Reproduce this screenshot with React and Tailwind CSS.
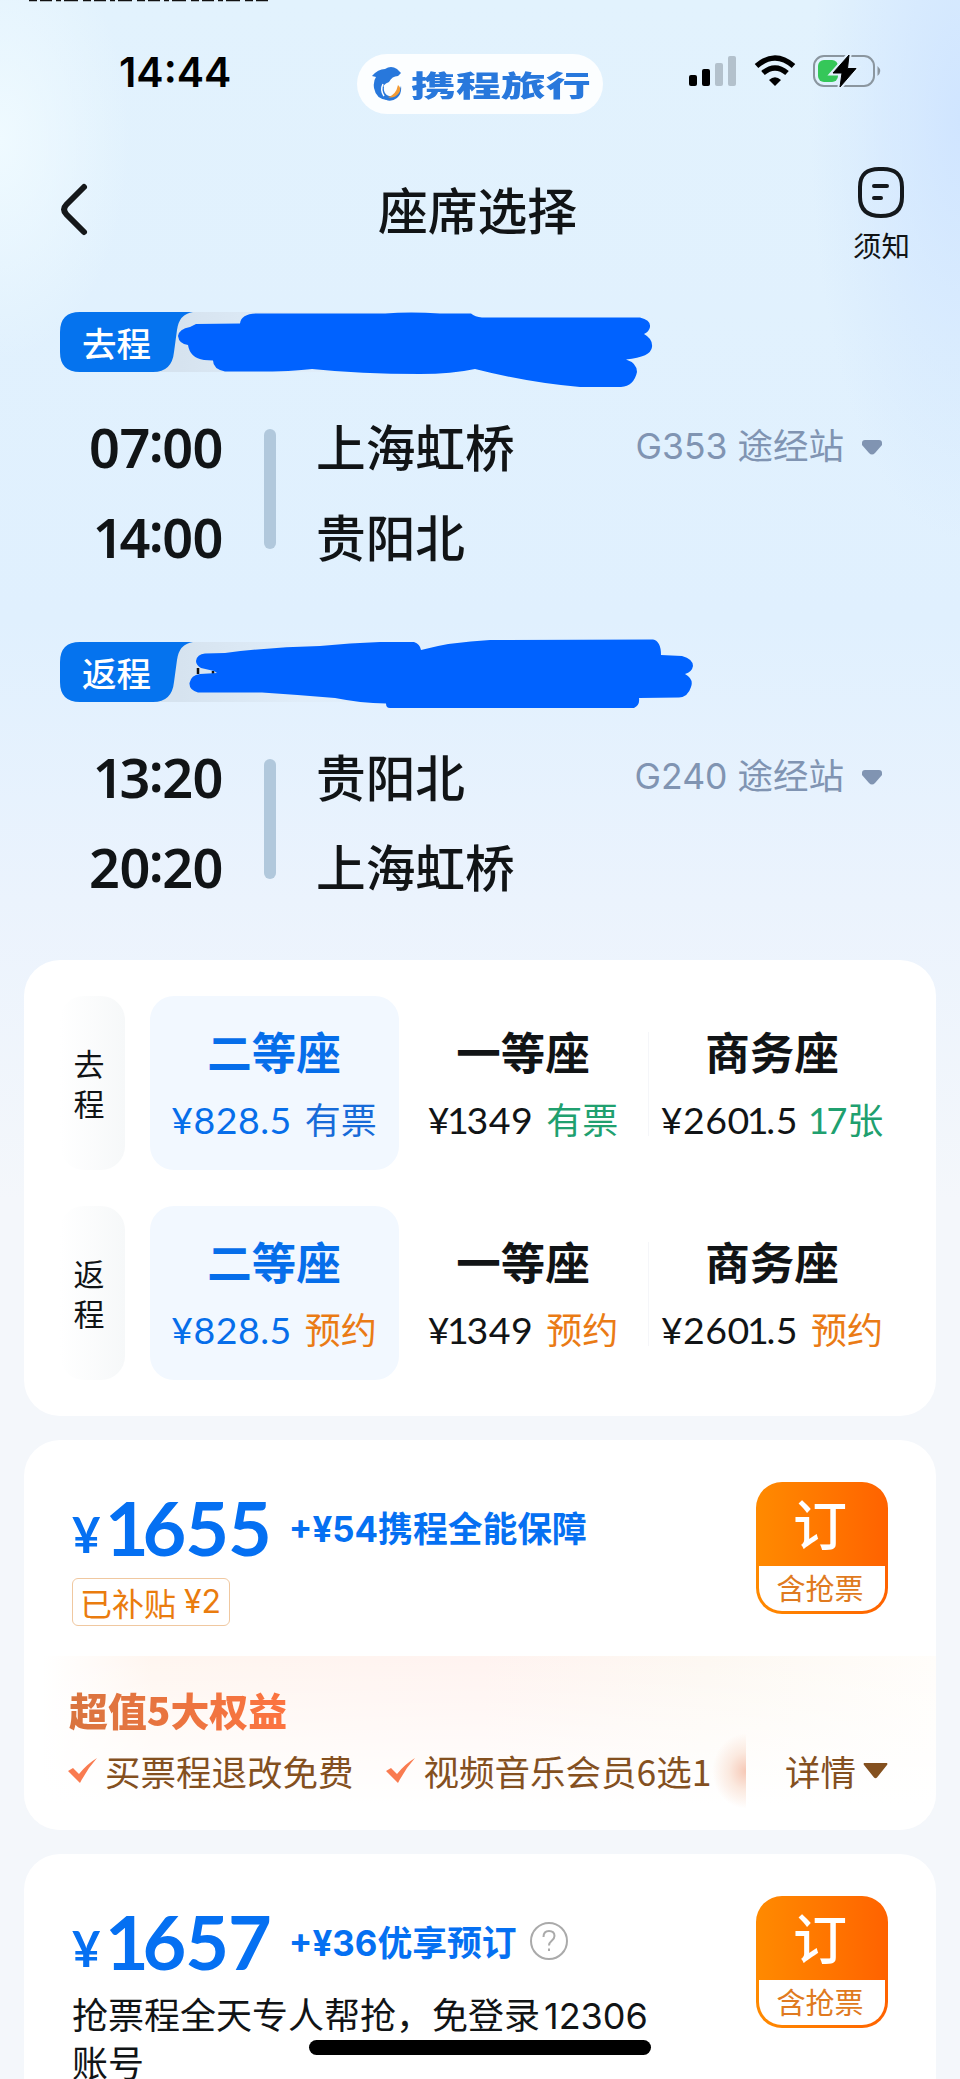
const TRIPS = [
  {
    label: '去程',
    train: 'G353',
    stops: [
      { time: ['07', '00'], station: '上海虹桥' },
      { time: ['14', '00'], station: '贵阳北' },
    ],
    mask: 'M178 336Q179 329 190 327L196 324L240 323.500Q241 314 256 313.500L385 313.500Q410 311.500 440 313.500L471 313.500Q475 317 482 317.500L640 317.500Q651 320 650 327Q649 332 644 334Q653 339 652 347Q651 357 626 359.500Q637 363 637 372Q634 386 621 387L580 387Q530 383 475 369Q452 374 420 374Q360 374 312 369Q290 372 240 371.500L225 371.500Q213 369 213 360.500L204 360Q190 358 188 345Q179 344 178 336Z',
  },
  {
    label: '返程',
    train: 'G240',
    stops: [
      { time: ['13', '20'], station: '贵阳北' },
      { time: ['20', '20'], station: '上海虹桥' },
    ],
    mask: 'M196 661Q197 654 205 653.500L225 653Q270 647 320 646Q350 643 380 642L414 642Q420 644 421 650Q450 642 490 640L653 639.500Q661 641 661 655L682 656Q693 659 693 666Q692 672 685 674Q694 679 691 687Q688 697 679 697.500L639 698Q640 705 634 708L390 708Q386 708 386 703.500Q360 703 335 698Q300 695 262 692.500L198 692.500Q189 690 189.500 683Q191 675 200 674L217 673L214 671L201 668Q196 665 196 661Z',
  },
]

const SEAT_ROWS = [
  {
    label: '去程',
    seats: [
      { name: '二等座', price: '¥828.5', status: '有票', tone: 'text-[#176bd8]', active: true },
      { name: '一等座', price: '¥1349', status: '有票', tone: 'text-[#20a06f]' },
      { name: '商务座', price: '¥2601.5', status: '17张', tone: 'text-[#20a06f]' },
    ],
  },
  {
    label: '返程',
    seats: [
      { name: '二等座', price: '¥828.5', status: '预约', tone: 'text-[#ea7b15]', active: true },
      { name: '一等座', price: '¥1349', status: '预约', tone: 'text-[#ea7b15]' },
      { name: '商务座', price: '¥2601.5', status: '预约', tone: 'text-[#ea7b15]' },
    ],
  },
]

// tabular figures leave too much air round a "1", so pull it in
function Digits({ children }) {
  return children.split(/(1)/).map((part, i) =>
    part === '1' ? <span key={i} className="-mr-[0.07em] -ml-[0.08em]">1</span> : part
  )
}

function StatusBar() {
  return (
    <div className="flex h-[60px] items-start pl-[119px]">
      <div className="w-[238px] font-[Inter,sans-serif] text-[41px] leading-[36px] font-semibold text-black">14:44</div>
      <div className="flex h-[60px] w-[246px] items-center rounded-full bg-white/90 pl-[14px]">
        <svg width="34" height="36" viewBox="0 0 34 36" fill="none">
          <path d="M1 10Q7 3 14 3Q20-1 26 3L30 7L27 10Q21 10 18 16Q11 18 11 26Q11 31 16 34Q5 33 3 22Q2 15 5 11Z" fill="#2878dc" />
          <path d="M11 18Q5 25 11 31Q18 38 26 32Q31 28 30 20Q27 31 18 30Q12 28 13 21" fill="#2878dc" />
          <path d="M27 19Q31 22 28 27Q23 33 17 31Q25 29 27 19Z" fill="#f39b35" />
          <path d="M12 18Q9 24 13 30" stroke="#fff" strokeWidth="1.500" />
        </svg>
        <span className="ml-[6px] inline-block origin-left scale-x-[1.55] whitespace-nowrap font-['Noto_Sans_CJK_SC',sans-serif] text-[29px] leading-[38px] font-black text-[#2878dc]">携程旅行</span>
      </div>
      <svg className="ml-[86px]" width="194" height="34" viewBox="0 0 194 34">
        <rect x="0" y="21" width="8" height="11" rx="2" />
        <rect x="13" y="15" width="8" height="17" rx="2" />
        <rect x="26" y="9" width="8" height="23" rx="2" fill="#b3c1cc" />
        <rect x="39" y="2" width="8" height="30" rx="2" fill="#b3c1cc" />
        <path d="M67.500 12Q86-4 104.500 12" fill="none" stroke="#000" strokeWidth="5.500" />
        <path d="M74 19Q86 9 98 19" fill="none" stroke="#000" strokeWidth="5.500" />
        <path d="M80 26Q86 20.500 92 26L86 32Z" />
        <rect x="125" y="2" width="60" height="30" rx="10" fill="none" stroke="#8b969f" strokeWidth="2" />
        <rect x="129" y="6" width="20" height="22" rx="6" fill="#35c759" />
        <path d="M188.500 12Q194 17 188.500 22Z" fill="#8b969f" />
        <path d="M160 1L144 19H153L151 33L167 14.500H158.500Z" stroke="#e1f0fd" strokeWidth="5" />
        <path d="M160 1L144 19H153L151 33L167 14.500H158.500Z" stroke="#000" strokeWidth="1" strokeLinejoin="round" />
      </svg>
    </div>
  )
}

function NavBar() {
  return (
    <div className="mt-[51px] flex h-[102px] items-start justify-between pr-[50px] pl-[58px]">
      <svg className="mt-[17px]" width="34" height="56" viewBox="0 0 34 56" fill="none" stroke="#15181a" strokeWidth="6" strokeLinecap="round">
        <path d="M26 5L8.500 22.500Q3.500 27.500 8.500 32.500L26 50" />
      </svg>
      <h1 className="mt-[13px] ml-[10px] text-[49.800px] leading-[60px] font-medium">座席选择</h1>
      <div className="flex flex-col items-center">
        <svg width="50" height="54" viewBox="0 0 50 54" fill="none" stroke="#14181c" strokeWidth="4" strokeLinecap="round">
          <path d="M25 4Q46 3 46 22V32Q46 51 25 51Q4 51 4 32V22Q4 3 25 4Z" />
          <path d="M18 21H31M18 33H25" />
        </svg>
        <span className="mt-[9px] text-[28.500px] leading-[34px]">须知</span>
      </div>
    </div>
  )
}

function Trip({ trip }) {
  return (
    <section className="h-[330px]">
      <div className="relative ml-[60px] flex h-[60px] w-[600px] items-center rounded-l-[20px] bg-linear-to-r from-[#d6e3ef] from-20% via-[#e0edf9] via-40% to-transparent to-70%">
        <svg className="absolute top-0 left-0" width="140" height="60" viewBox="0 0 140 60">
          <path d="M20 0H133Q119 2 117 18L114 40Q112 60 93 60H20Q0 60 0 40V20Q0 0 20 0Z" fill="#0573ee" />
        </svg>
        <span className="relative ml-[22px] text-[34.500px] leading-[56px] font-medium text-white">{trip.label}</span>
      </div>
      <div className="mt-[31px] flex">
        <div className="flex w-[223px] flex-col items-end font-['Noto_Sans',sans-serif] text-[54px] font-semibold tracking-[-0.5px]">
          {trip.stops.map(stop => (
            <div key={stop.time.join(':')} className="flex h-[88px] items-center leading-[88px] first:mb-[2px]">
              <span><Digits>{stop.time[0]}</Digits></span>
              <span className="relative -top-[6px] -mx-[1px]">:</span>
              {stop.time[1]}
            </div>
          ))}
        </div>
        <div className="mt-[26px] ml-[41px] h-[120px] w-3 rounded-full bg-[#b1c8dc]" />
        <div className="ml-[40px] text-[49.700px] font-medium">
          {trip.stops.map(stop => (
            <div key={stop.station} className="h-[90px] leading-[85px]">{stop.station}</div>
          ))}
        </div>
        <div className="mr-[78px] ml-auto flex h-[88px] items-center text-[#8094b2]">
          <span className="font-[Inter,'Noto_Sans_CJK_SC',sans-serif] text-[35.500px] leading-[90px]">{trip.train} 途经站</span>
          <svg className="ml-[18px]" width="20" height="15" viewBox="0 0 20 15" fill="currentColor">
            <path d="M3 0H17Q20 0 20 3V5L13 13Q10 16 7 13L0 5V3Q0 0 3 0Z" />
          </svg>
        </div>
      </div>
    </section>
  )
}

function Seat({ seat, divided }) {
  return (
    <div
      className={
        seat.active
          ? 'flex h-[174px] w-[249px] flex-col items-center rounded-[24px] bg-[#f2f8ff] text-[#066eea]'
          : 'relative flex h-[174px] w-[249px] flex-col items-center'
      }
    >
      {divided && <div className="absolute top-9 left-0 h-[104px] w-px bg-[#f5f6f9]" />}
      <div className="mt-[23px] -ml-[1px] text-[44.500px] leading-[64px] font-bold">{seat.name}</div>
      <div className="mt-[5px] -ml-[1px] flex h-[64px] items-center text-[36px] leading-[64px] whitespace-nowrap">
        <span className="font-[Lato,sans-serif] text-[37.500px] tracking-[0.5px]"><Digits>{seat.price}</Digits></span>
        <span className={`ml-[13px] font-[Lato,'Noto_Sans_CJK_SC',sans-serif] ${seat.tone}`}><Digits>{seat.status}</Digits></span>
      </div>
    </div>
  )
}

function BookButton() {
  return (
    <button className="flex h-[132px] w-[132px] flex-col rounded-[26px] bg-linear-to-r from-[#ff8a00] to-[#ff6200] p-[3px] pt-0">
      <span className="h-[84px] w-full pr-[4px] text-center text-[54px] leading-[82px] font-medium text-white">订</span>
      <span className="h-[45px] w-full rounded-b-[23px] bg-white pr-[4px] text-center text-[29px] leading-[42px] text-[#e07a20]">含抢票</span>
    </button>
  )
}

function Price({ amount, extra, children }) {
  return (
    <div className="flex h-[84px] items-baseline pt-[5px] text-[#0570f2]">
      <span className="relative -top-[3px] w-[33px] font-[Lato,sans-serif] text-[49px] leading-[80px] font-bold">¥</span>
      <span className="ml-[6px] font-[Lato,sans-serif] text-[75.500px] leading-[80px] font-bold tracking-[-1px]"><Digits>{amount}</Digits></span>
      <span className="relative -top-[14px] ml-[18px] font-[Inter,'Noto_Sans_CJK_SC',sans-serif] text-[34.800px] leading-[50px] font-bold">{extra}</span>
      {children}
    </div>
  )
}

function Check() {
  return (
    <svg width="30" height="26" viewBox="0 0 30 26" fill="#f97b50">
      <path d="M0 13L5 10L11 16Q19 6 29 0Q19 11 12 25Z" />
    </svg>
  )
}

function Benefits() {
  return (
    <div className="h-[174px] rounded-b-[36px] bg-[linear-gradient(180deg,transparent_0%,#fff_85%),linear-gradient(90deg,#fff_2%,#fff6f0_14%,#fff3f0_50%,#fdf8f2_75%,#fffdfa_100%)] pt-[29px] pl-[44px]">
      <div className="ml-[1px] w-max bg-linear-to-r from-[#d9743f] to-[#fd7440] bg-clip-text text-[38.900px] leading-[48px] font-black text-transparent">超值5大权益</div>
      <div className="relative mt-[8px] flex h-[60px] items-center text-[35.500px] leading-[60px] whitespace-nowrap text-[#84501f]">
        <Check />
        <span className="ml-[7px]">买票程退改免费</span>
        <span className="ml-[32px]"><Check /></span>
        <span className="ml-[8px]">视频音乐会员6选1</span>
        <div className="absolute top-[-8px] left-[644px] h-[76px] w-[34px] bg-[radial-gradient(ellipse_at_right,#f6c8b6_0%,#fbe9df_35%,transparent_70%)]" />
        <span className="absolute left-[717px]">详情</span>
        <svg className="absolute left-[795px]" width="25" height="16" viewBox="0 0 25 16" fill="#84501f">
          <path d="M1 0H24Q25 1 24 2L14 14.500Q12.500 16 11 14.500L1 2Q0 1 1 0Z" />
        </svg>
      </div>
    </div>
  )
}

export default function App() {
  return (
    <div className="relative h-[2079px] w-[960px] overflow-hidden bg-[radial-gradient(130px_220px_at_0px_140px,#effaff_0%,transparent_100%),radial-gradient(150px_420px_at_960px_120px,#d0e5ff_0%,transparent_100%),linear-gradient(180deg,#e2f2fd_0px,#e0f0fe_620px,#ebf3fd_900px,#f4f7fb_1200px)] pt-[54px] font-['Noto_Sans_CJK_SC',sans-serif] text-[#111416]">
      <svg className="absolute top-0 left-[29px]" width="240" height="2">
        <path d="M0 .5H239" stroke="#111" strokeWidth="1.500" strokeDasharray="8 3 12 4 5 3 14 5" />
      </svg>

      <StatusBar />
      <NavBar />

      <div className="mt-[45px] h-[648px]">
        {TRIPS.map(trip => (
          <Trip key={trip.train} trip={trip} />
        ))}
      </div>

      {/* hand-drawn redactions over the travel dates */}
      <svg className="absolute top-0 left-0" width="720" height="720" viewBox="0 0 720 720">
        <path d="M198 668V674M213 671V674" stroke="#111" strokeWidth="2.500" />
        {TRIPS.map(trip => (
          <path key={trip.train} d={trip.mask} fill="#0062ff" />
        ))}
      </svg>

      <main className="mx-6 flex flex-col gap-6">
        <section className="flex h-[456px] flex-col gap-9 rounded-[36px] bg-white pt-9 pl-9">
          {SEAT_ROWS.map(row => (
            <div key={row.label} className="flex">
              <div className="mr-[25px] flex h-[174px] w-[65px] items-center justify-center rounded-[24px] bg-linear-to-r from-white to-[#f6f8f9] pr-[7px]">
                <span className="w-[31px] text-[31px] leading-[40px]">{row.label}</span>
              </div>
              {row.seats.map((seat, i) => (
                <Seat key={seat.name} seat={seat} divided={i === 2} />
              ))}
            </div>
          ))}
        </section>

        <section className="flex h-[390px] flex-col justify-between rounded-[36px] bg-white">
          <div className="flex justify-between pt-[42px] pr-12 pl-12">
            <div>
              <Price amount="1655" extra="+¥54携程全能保障" />
              <div className="mt-[12px] flex h-[48px] w-[158px] items-center rounded-[6px] border border-[#f0c8a0] pl-[7px] text-[32px] leading-[44px] whitespace-nowrap text-[#ea7c0e]">
                已补贴<span className="ml-[8px] font-[Inter,sans-serif]">¥2</span>
              </div>
            </div>
            <BookButton />
          </div>
          <Benefits />
        </section>

        <section className="flex h-[390px] justify-between rounded-[36px] bg-white pt-[42px] pr-12 pl-12">
          <div className="w-[600px]">
            <Price amount="1657" extra="+¥36优享预订">
              <svg className="ml-[13px] self-center" width="38" height="38" viewBox="0 0 38 38" fill="none" stroke="#aaa" strokeWidth="2">
                <circle cx="19" cy="19" r="18" />
                <path d="M13.500 15Q13.500 9 19 9Q24.500 9 24.500 14Q24.500 16.500 21.500 19Q19 21 19 23.500M19 26.500V29" />
              </svg>
            </Price>
            <p className="mt-[12px] font-[Inter,'Noto_Sans_CJK_SC',sans-serif] text-[36px] leading-[48px]">
              抢票程全天专人帮抢，免登录<span className="ml-[4px]">12306</span>
              <br />
              账号
            </p>
          </div>
          <BookButton />
        </section>
      </main>

      <div className="absolute top-[2040px] left-[309px] h-[15px] w-[342px] rounded-full bg-black" />
    </div>
  )
}
